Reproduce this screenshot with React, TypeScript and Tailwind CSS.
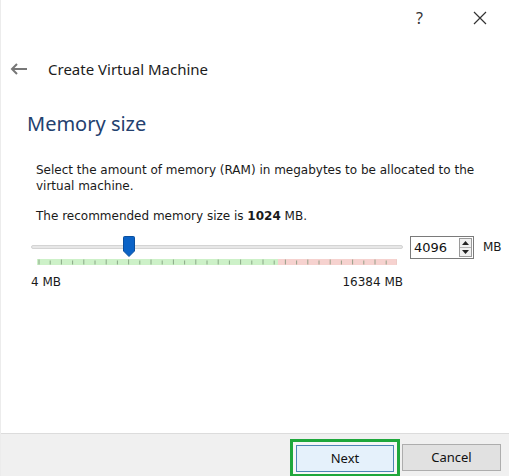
import React from 'react';

const ticks = Array.from({ length: 33 }, (_, i) => i);

function Slider() {
  return (
    <div className="w-[372px] shrink-0">
      {/* track + handle */}
      <div className="relative h-[22px]">
        <div className="absolute left-0 right-0 top-[9px] h-[4px] rounded-[2px] border border-[#d4d4d4] bg-[#e7e7e7]" />
        <svg className="absolute left-[92px] top-0" width="12" height="21" viewBox="0 0 12 21">
          <path d="M1.5 0.5 H10.5 Q11.5 0.5 11.5 1.5 V15 L6 20.5 L0.5 15 V1.5 Q0.5 0.5 1.5 0.5 Z" fill="#0b63c7" stroke="#0a4f9e" />
        </svg>
      </div>
      {/* coloured tick scale */}
      <div className="ml-[6px] mt-[1px] flex h-[6px] w-[360px]">
        <div className="h-full w-[241px] bg-[#cdf1c8]" />
        <div className="h-full w-[119px] bg-[#f6d2cf]" />
      </div>
      <svg className="ml-[6px] -mt-[6px] block" width="360" height="6" viewBox="0 0 360 6">
        {ticks.map((i) => (
          <line key={i} x1={2 + i * 11.2} x2={2 + i * 11.2} y1={i % 2 === 0 ? 0.5 : 1.5} y2={5.5} stroke="#6f8a6c" strokeOpacity="0.7" strokeWidth="1" />
        ))}
      </svg>
      <div className="mt-[9px] flex justify-between text-[12px] leading-[16px] text-[#1a1a1a]">
        <span>4 MB</span>
        <span>16384 MB</span>
      </div>
    </div>
  );
}

function SpinBox() {
  return (
    <div className="flex items-start gap-[9px]">
      <div className="flex h-[23px] w-[64px] items-center justify-between border border-[#7a7a7a] bg-white pl-[3px] pr-[1px]">
        <span className="text-[13px] leading-none text-[#111]">4096</span>
        <div className="flex h-[19px] w-[13px] flex-col border border-[#9a9a9a] bg-[#f0f0f0]">
          <div className="flex flex-1 items-center justify-center border-b border-[#b5b5b5]">
            <svg width="7" height="4" viewBox="0 0 7 4"><path d="M0 4 L3.5 0 L7 4 Z" fill="#222" /></svg>
          </div>
          <div className="flex flex-1 items-center justify-center">
            <svg width="7" height="4" viewBox="0 0 7 4"><path d="M0 0 L3.5 4 L7 0 Z" fill="#222" /></svg>
          </div>
        </div>
      </div>
      <span className="text-[12px] leading-[23px] text-[#1a1a1a]">MB</span>
    </div>
  );
}

export default function App() {
  return (
    <div className="flex h-[476px] w-[509px] flex-col overflow-hidden border-l border-[#ececec] bg-white font-['DejaVu_Sans',sans-serif]">
      {/* window caption buttons */}
      <div className="flex h-[35px] items-center justify-end pr-[22px] font-['Noto_Sans',sans-serif] text-[#333]">
        <span className="mr-[50px] text-[16px]">?</span>
        <svg width="14" height="14" viewBox="0 0 14 14">
          <path d="M1 1 L13 13 M13 1 L1 13" stroke="#333" strokeWidth="1.2" />
        </svg>
      </div>

      {/* title row */}
      <div className="mt-[17px] flex h-[34px] items-center pl-[9px] font-['Noto_Sans',sans-serif]">
        <svg width="18" height="12" viewBox="0 0 18 12">
          <path d="M17 6 H2 M7 1 L2 6 L7 11" fill="none" stroke="#777" strokeWidth="2" />
        </svg>
        <span className="ml-[20px] text-[15px] text-[#1c1c1c]">Create Virtual Machine</span>
      </div>

      {/* page heading */}
      <div className="mt-[24px] pl-[26px] font-['Noto_Sans',sans-serif] text-[20px] leading-[28px] text-[#23416f]">
        Memory size
      </div>

      {/* body */}
      <div className="pl-[35px] pr-[28px] text-[12px] text-[#1a1a1a]">
        <p className="mt-[24px] leading-[16px]">
          Select the amount of memory (RAM) in megabytes to be allocated to the virtual machine.
        </p>
        <p className="mt-[14px] leading-[16px]">
          The recommended memory size is <b>1024</b> MB.
        </p>
      </div>

      <div className="mt-[12px] flex pl-[30px]">
        <Slider />
        <div className="ml-[7px]">
          <SpinBox />
        </div>
      </div>

      <div className="flex-1" />

      {/* footer */}
      <div className="flex h-[43px] items-start justify-end border-t border-[#dcdcdc] bg-[#f0f0f0] pr-[8px] pt-[5px] font-['Noto_Sans',sans-serif] text-[13px] text-[#111]">
        <div className="h-[38px] w-[110px] border-[3px] border-[#1fa83c] bg-[#f7f7f7] p-[3px]">
          <button className="h-[27px] w-full border border-[#4f86b5] bg-[#e5f1fb]">Next</button>
        </div>
        <button className="ml-[2px] mt-[5px] h-[27px] w-[99px] border border-[#adadad] bg-[#e1e1e1]">Cancel</button>
      </div>
    </div>
  );
}
